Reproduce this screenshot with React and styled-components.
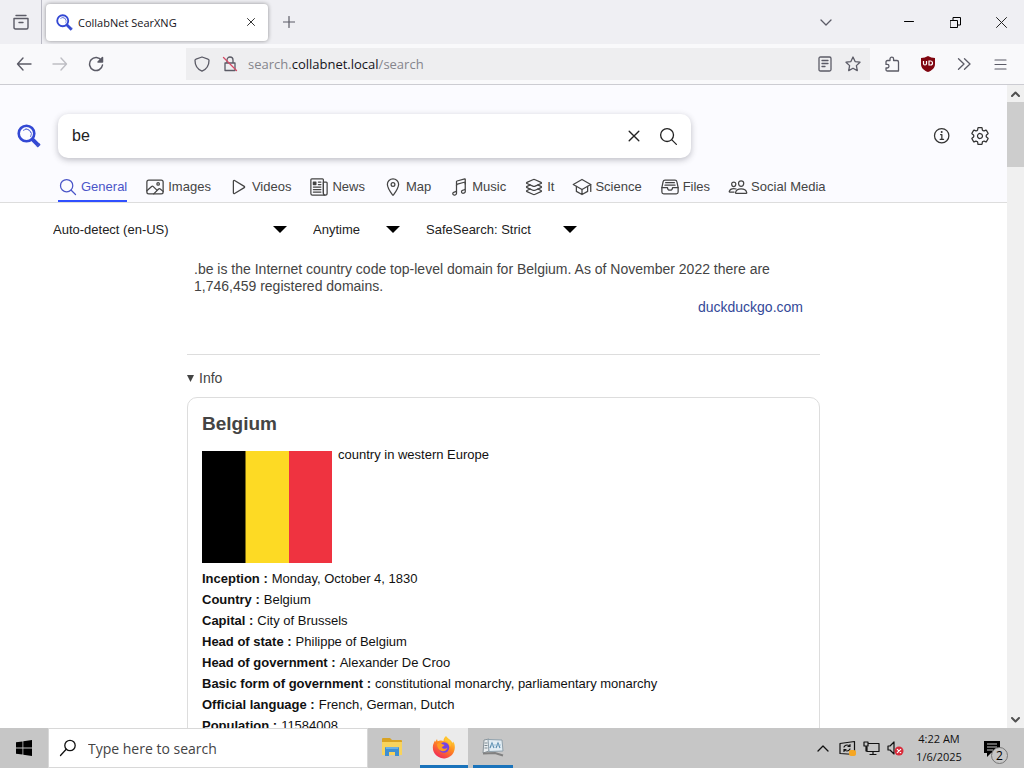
import React from "react";
import styled, { createGlobalStyle } from "styled-components";
import {
  IoSearchOutline,
  IoImageOutline,
  IoPlayOutline,
  IoNewspaperOutline,
  IoLocationOutline,
  IoMusicalNotesOutline,
  IoLayersOutline,
  IoSchoolOutline,
  IoFileTrayFullOutline,
  IoPeopleOutline,
  IoInformationCircleOutline,
  IoSettingsOutline,
  IoCloseOutline,
} from "react-icons/io5";

const uiFont = '"Open Sans", "Noto Sans", sans-serif';
const pageFont = '"Liberation Sans", Arial, sans-serif';

const GlobalStyle = createGlobalStyle`
  * { box-sizing: border-box; }
  body { margin: 0; font-family: ${pageFont}; background: #fff; }
  button, input, select { font: inherit; color: inherit; margin: 0; }
  svg { display: block; flex: none; }
`;

const Desktop = styled.div`
  display: flex;
  flex-direction: column;
  height: 100vh;
  overflow: hidden;
`;

const IconButton = styled.button`
  display: grid;
  place-items: center;
  flex: none;
  width: ${(p) => p.$width || 32}px;
  height: ${(p) => p.$height || 32}px;
  padding: 0;
  border: 0;
  background: none;
  color: ${(p) => p.$color || "#5b5b66"};
`;

/* Browser chrome */

const TabStrip = styled.div`
  display: flex;
  flex: none;
  align-items: center;
  height: 44px;
  background: #efeff3;
  font-family: ${uiFont};
`;

const TabListButton = styled(IconButton)`
  border-right: 1px solid #b9b9c4;
`;

const Tab = styled.div`
  display: flex;
  align-items: center;
  width: 222px;
  height: 37px;
  margin: 0 5px 0 4px;
  padding: 0 1px 0 10px;
  gap: 5px;
  border-radius: 4px;
  background: #fff;
  box-shadow: 0 0 4px rgba(0, 0, 0, 0.4);
  font-size: 11px;
  color: #15141a;
`;

const TabTitle = styled.span`
  flex: 1;
  white-space: nowrap;
`;

const WindowControls = styled.div`
  display: flex;
  margin-left: 44px;
`;

const Spacer = styled.div`
  flex: 1;
`;

const NavBar = styled.div`
  display: flex;
  flex: none;
  align-items: center;
  height: 41px;
  padding: 0 8px;
  gap: 4px;
  background: #f9f9fb;
  border-bottom: 1px solid #ccccd2;
  font-family: ${uiFont};
`;

const AddressBar = styled.div`
  display: flex;
  flex: 1;
  align-items: center;
  height: 32px;
  margin: 0 2px 0 70px;
  padding: 0 3px 0 2px;
  background: #eeeef0;
`;

const Address = styled.div`
  flex: 1;
  padding-left: 4px;
  font-size: 13px;
  color: #85858c;

  b {
    font-weight: 400;
    color: #15141a;
  }
`;

/* Page */

const Viewport = styled.div`
  display: flex;
  flex: 1;
  min-height: 0;
`;

const Page = styled.main`
  flex: 1;
  min-width: 0;
  overflow: hidden;
  background: #fff;
  color: #444;
`;

const Header = styled.header`
  background: #fbfbff;
  border-bottom: 1px solid #ddd;
`;

const SearchRow = styled.div`
  display: flex;
  align-items: center;
  padding: 29px 17px 0 17px;
`;

const LogoLink = styled.a`
  width: 41px;
`;

const SearchBox = styled.form`
  display: flex;
  align-items: center;
  flex: 0 1 633px;
  height: 44px;
  padding: 0 5px 0 14px;
  border-radius: 10px;
  background: #fff;
  box-shadow: 0 2px 6px rgba(60, 60, 70, 0.32);
  color: #222;
`;

const SearchInput = styled.input`
  flex: 1;
  min-width: 0;
  padding: 0;
  border: 0;
  outline: 0;
  background: none;
  font-size: 16px;
`;

const HeaderLinks = styled.nav`
  display: flex;
  margin-left: auto;
  gap: 18px;
`;

const HeaderLink = styled.a`
  color: #333;
`;

const Categories = styled.nav`
  display: flex;
  gap: 17px;
  margin: 15px 0 0 58px;
`;

const Category = styled.a`
  display: flex;
  align-items: center;
  gap: 3px;
  height: 29px;
  border-bottom: 2px solid ${(p) => (p.$active ? "#3050ff" : "transparent")};
  color: ${(p) => (p.$active ? "#4a55c8" : "#444")};
  font-size: 13px;
  text-decoration: none;
  white-space: nowrap;

  & + & {
    padding-left: 1px;
  }
`;

const Filters = styled.div`
  display: flex;
  gap: 26px;
  padding: 13px 0 0 53px;
  color: #222;
`;

const Filter = styled.label`
  display: grid;
  align-items: center;
  width: ${(p) => p.$width}px;
  height: 26px;
  font-size: 13px;

  select,
  svg {
    grid-area: 1 / 1;
  }

  svg {
    justify-self: end;
    pointer-events: none;
  }

  select {
    appearance: none;
    width: 100%;
    padding: 0;
    border: 0;
    background: none;
  }
`;

const Results = styled.div`
  width: 633px;
  max-width: calc(100% - 187px);
  margin-left: 187px;
`;

const Answer = styled.section`
  padding: 19px 17px 38px 7px;
  border-bottom: 1px solid #ddd;
  font-size: 14px;
  line-height: 17px;

  p {
    margin: 0 0 4px;
  }
`;

const SourceLink = styled.a`
  display: block;
  text-align: right;
  color: #334999;
  text-decoration: none;
`;

const InfoToggle = styled.summary`
  display: flex;
  align-items: center;
  gap: 5px;
  padding: 15px 0 10px;
  font-size: 14px;
  line-height: 17px;
  list-style: none;
`;

const InfoCard = styled.article`
  padding: 14px;
  border: 1px solid #ddd;
  border-radius: 10px;
  color: #111;
  font-size: 13px;
`;

const CardTitle = styled.h2`
  margin: 0 0 16px;
  font-size: 19px;
  line-height: 23px;
  color: #444;
`;

const Summary = styled.div`
  display: flex;
  gap: 6px;
  margin-bottom: 5px;
  line-height: 7px;

  p {
    margin: 0;
  }
`;

const FactList = styled.dl`
  margin: 0;
  line-height: 21px;
`;

const Fact = styled.div`
  display: flex;
  gap: 4px;

  dt {
    font-weight: 700;
  }

  dd {
    margin: 0;
  }
`;

const ScrollBar = styled.div`
  display: flex;
  flex-direction: column;
  width: 17px;
  background: #f0f0f0;
`;

const ScrollThumb = styled.div`
  height: 65px;
  background: #cdcdcd;
`;

/* Taskbar */

const Taskbar = styled.footer`
  display: flex;
  flex: none;
  align-items: center;
  height: 40px;
  background: #c6c6c6;
  color: #111;
  font-family: ${uiFont};
`;

const TaskSearch = styled.label`
  display: flex;
  align-items: center;
  gap: 11px;
  flex: 0 1 320px;
  height: 40px;
  padding-left: 10px;
  border: 1px solid #d8d8d8;
  background: #fff;
  font-size: 14px;

  input {
    flex: 1;
    min-width: 0;
    padding: 0;
    border: 0;
    outline: 0;
    background: none;
  }

  input::placeholder {
    color: #444;
    opacity: 1;
  }
`;

const TaskApps = styled.div`
  display: flex;
  gap: 5px;
`;

const TaskButton = styled(IconButton)`
  background: ${(p) => (p.$active ? "#ebebeb" : "none")};
  border-bottom: 3px solid ${(p) => (p.$open ? "#1a73bb" : "transparent")};
`;

const Tray = styled.div`
  display: flex;
  align-items: center;
  margin-left: auto;
  padding-right: 15px;
`;

const Clock = styled.time`
  width: 62px;
  margin: 0 13px 0 1px;
  font-size: 11px;
  line-height: 18px;
  text-align: center;
  white-space: nowrap;
`;

const Line = ({ size = 16, width = size, height = size, stroke = 1, children }) => (
  <svg
    width={width}
    height={height}
    viewBox={`0 0 ${width} ${height}`}
    fill="none"
    stroke="currentColor"
    strokeWidth={stroke}
    strokeLinecap="round"
    strokeLinejoin="round"
    aria-hidden="true"
  >
    {children}
  </svg>
);

const Logo = ({ size }) => (
  <svg width={size} height={size} viewBox="0 0 24 24" fill="none" aria-hidden="true">
    <circle cx="9.5" cy="9.5" r="7.8" stroke="#3348d4" strokeWidth="2.6" />
    <path d="M6 6.5a5 5 0 0 1 7.5 6.5M8 5.2a5 5 0 0 1 6 4" stroke="#6878db" strokeWidth="1" />
    <path d="M15.2 15.2l7 7" stroke="#3348d4" strokeWidth="4" />
    <path d="M19.6 22.2l2.8-2.8" stroke="#5260b8" strokeWidth="1" />
  </svg>
);

const CaretDown = () => (
  <svg width="14" height="7" viewBox="0 0 14 7" aria-hidden="true">
    <path d="M0 0h14L7 7z" fill="#000" />
  </svg>
);

const Flag = () => (
  <svg width="130" height="112" viewBox="0 0 130 112" role="img" aria-label="Flag of Belgium">
    <path d="M0 0h44v112H0z" fill="#000" />
    <path d="M43.500 0h43.500v112h-43.500z" fill="#fdda24" />
    <path d="M87 0h43v112H87z" fill="#ef3340" />
  </svg>
);

const FolderIcon = () => (
  <svg width="22" height="20" viewBox="0 0 22 20" aria-hidden="true">
    <path d="M1 2q0-1 1-1h7l2 2h9q1 0 1 1v13H1z" fill="#d9a323" />
    <path d="M1 5h20v13H1z" fill="#f8d35c" />
    <path d="M4 19v-8q0-1 1-1h12q1 0 1 1v8h-4v-4H8v4z" fill="#3f8fd2" />
    <path d="M5 10h12v2H5z" fill="#6ab0e4" />
  </svg>
);

const FirefoxIcon = () => (
  <svg width="24" height="24" viewBox="0 0 24 24" aria-hidden="true">
    <defs>
      <linearGradient id="fox" x1="0.8" y1="0" x2="0.2" y2="1">
        <stop offset="0" stopColor="#ffdf3a" />
        <stop offset="0.45" stopColor="#ff8a1f" />
        <stop offset="1" stopColor="#f01f5d" />
      </linearGradient>
    </defs>
    <path
      d="M14 1c1 2 4 3 6 6l1 1 .2-1.500c1.300 2 1.800 4 1.600 6.500A11 11 0 1 1 2 7.500l1-2 .3 1.500L5 4l.6 2.200L8 5.500c1.500-.3 2.500 0 3.500.5C11.500 4 12.500 2 14 1z"
      fill="url(#fox)"
    />
    <circle cx="12" cy="12.500" r="5.200" fill="#7542e5" />
    <path d="M5 9c2-1.500 4-1 5.500.2l2 .8c-.5 1.400-1.800 1.500-2.700 2 .5 2 4 2.500 5.700.5-.5 3-3.500 4.500-6 3.500C6.500 15 5 12 5 9z" fill="#ff9a22" />
    <path d="M13 6c3 0 5 3 5 6 1-2 1-4 0-6-1.500-2-3-2.500-4-4-1 1-1.500 2.500-1 4z" fill="#ffc52e" />
  </svg>
);

const MonitorIcon = () => (
  <svg width="24" height="20" viewBox="0 0 24 20" aria-hidden="true">
    <path d="M3 3l5-1v12l-6 2z" fill="#e9edef" stroke="#8a959c" />
    <path d="M7 2.500L21 3l1 11-14 .5z" fill="#e2edf4" stroke="#8fa0ab" />
    <path d="M9 11l2-5 2 5M15 11l2-5 2 5" fill="none" stroke="#5a8db0" strokeWidth="1.200" />
    <path d="M10 8h10" stroke="#9fc0d6" />
    <path d="M3.500 6h3M3.500 8.500h3M3.500 11h3" stroke="#7c8a92" />
    <path d="M2 16.500l12-.5 8 2.500" fill="none" stroke="#808080" strokeWidth="2" />
  </svg>
);

const categories = [
  ["General", IoSearchOutline],
  ["Images", IoImageOutline],
  ["Videos", IoPlayOutline],
  ["News", IoNewspaperOutline],
  ["Map", IoLocationOutline],
  ["Music", IoMusicalNotesOutline],
  ["It", IoLayersOutline],
  ["Science", IoSchoolOutline],
  ["Files", IoFileTrayFullOutline],
  ["Social Media", IoPeopleOutline],
];

const filters = [
  { label: "Language", value: "Auto-detect (en-US)", width: 234 },
  { label: "Time range", value: "Anytime", width: 87 },
  { label: "SafeSearch", value: "SafeSearch: Strict", width: 151 },
];

const facts = [
  ["Inception", "Monday, October 4, 1830"],
  ["Country", "Belgium"],
  ["Capital", "City of Brussels"],
  ["Head of state", "Philippe of Belgium"],
  ["Head of government", "Alexander De Croo"],
  ["Basic form of government", "constitutional monarchy, parliamentary monarchy"],
  ["Official language", "French, German, Dutch"],
  ["Population", "11584008"],
];

function BrowserTabs() {
  return (
    <TabStrip>
      <TabListButton $width={42} $height={44} aria-label="Firefox View">
        <Line size={16} stroke={1.4}>
          <path d="M3 1.500h10M1 4.500h14v9q0 1.500-1.500 1.500h-11Q1 15 1 13.500zM6 8.500h4" />
        </Line>
      </TabListButton>
      <Tab>
        <Logo size={17} />
        <TabTitle>CollabNet SearXNG</TabTitle>
        <IconButton aria-label="Close tab" $color="#333">
          <Line size={8}>
            <path d="M0.500 0.500l7 7M7.500 0.500l-7 7" />
          </Line>
        </IconButton>
      </Tab>
      <IconButton aria-label="New tab">
        <Line size={12} stroke={1.2}>
          <path d="M6 0.500v11M0.500 6h11" />
        </Line>
      </IconButton>
      <Spacer />
      <IconButton aria-label="List all tabs">
        <Line width={12} height={7} stroke={1.3}>
          <path d="M1 1l5 5 5-5" />
        </Line>
      </IconButton>
      <WindowControls>
        <IconButton aria-label="Minimize" $width={46} $color="#000">
          <Line width={10} height={2}>
            <path d="M0.500 0.500h9" />
          </Line>
        </IconButton>
        <IconButton aria-label="Restore" $width={46} $color="#000">
          <Line size={11}>
            <path d="M0.500 3.500h7v7h-7zM3 3V0.500h7.500V8H8" />
          </Line>
        </IconButton>
        <IconButton aria-label="Close" $width={46} $color="#222">
          <Line size={11}>
            <path d="M0.500 0.500l10 10M10.500 0.500l-10 10" />
          </Line>
        </IconButton>
      </WindowControls>
    </TabStrip>
  );
}

function BrowserNav() {
  return (
    <NavBar>
      <IconButton aria-label="Back">
        <Line size={16} stroke={1.4}>
          <path d="M15 8H1.500M7 2L1.500 8 7 14" />
        </Line>
      </IconButton>
      <IconButton aria-label="Forward" $color="#bebec4">
        <Line size={16} stroke={1.4}>
          <path d="M1 8h13.500M9 2l5.500 6L9 14" />
        </Line>
      </IconButton>
      <IconButton aria-label="Reload">
        <Line size={16} stroke={1.5}>
          <path d="M13.500 4.500A6.500 6.500 0 1 0 14.500 9" />
          <path d="M14.500 1.500V6H10z" fill="currentColor" />
        </Line>
      </IconButton>
      <AddressBar>
        <IconButton aria-label="Tracking protection" $width={28}>
          <Line size={16} stroke={1.3}>
            <path d="M8 1l6 2.200q1 .3 1 1.300c0 5-2 8.500-7 10.700C3 13 1 9.500 1 4.500q0-1 1-1.300z" />
          </Line>
        </IconButton>
        <IconButton aria-label="Connection not secure" $width={28}>
          <Line size={16} stroke={1.3}>
            <path d="M3 7h10v7.500H3zM5 7V4a3 3 0 0 1 6 0v3" />
            <path d="M1.500 1.500l13 13" stroke="#d44a66" />
          </Line>
        </IconButton>
        <Address>
          search.<b>collabnet.local</b>/search
        </Address>
        <IconButton aria-label="Reader view" $width={28}>
          <Line width={14} height={16} stroke={1.3}>
            <path d="M2.500 1h9q1.500 0 1.500 1.500v11q0 1.500-1.500 1.500h-9Q1 15 1 13.500v-11Q1 1 2.500 1zM4 4.500h6M4 7.500h6M4 10.500h3" />
          </Line>
        </IconButton>
        <IconButton aria-label="Bookmark this page" $width={28}>
          <Line size={16} stroke={1.3}>
            <path d="M8 1l2.100 4.600 4.900.6-3.600 3.400.9 5L8 12.200l-4.300 2.400.9-5L1 6.200l4.900-.6z" />
          </Line>
        </IconButton>
      </AddressBar>
      <IconButton aria-label="Extensions">
        <Line size={16} stroke={1.3}>
          <path d="M2 6q0-1.500 1.500-1.500H6V3a1.800 1.800 0 0 1 3.600 0v1.500H13q1.500 0 1.500 1.500v9H3.500Q2 15 2 13.500V12h1.200a1.800 1.800 0 0 0 0-3.600H2z" />
        </Line>
      </IconButton>
      <IconButton aria-label="uBlock Origin">
        <svg width="16" height="16" viewBox="0 0 16 16" aria-hidden="true">
          <path d="M8 0q3 2 7 2v6c0 4-3 6.500-7 8-4-1.500-7-4-7-8V2q4 0 7-2z" fill="#800610" />
          <path d="M3.500 5v2.500a1.500 1.500 0 0 0 3 0V5M9 5v4h1.500a2 2 0 0 0 0-4z" fill="none" stroke="#fff" strokeWidth="1.200" />
        </svg>
      </IconButton>
      <IconButton aria-label="More tools">
        <Line width={14} height={12} stroke={1.3}>
          <path d="M1.500 0.800L7 6l-5.500 5.200M7.500 0.800L13 6l-5.500 5.200" />
        </Line>
      </IconButton>
      <IconButton aria-label="Open application menu">
        <Line width={13} height={11} stroke={1.2}>
          <path d="M1 1h11M1 5.500h11M1 10h11" />
        </Line>
      </IconButton>
    </NavBar>
  );
}

function SearchHeader() {
  return (
    <Header>
      <SearchRow>
        <LogoLink href="#home" aria-label="SearXNG home">
          <Logo size={24} />
        </LogoLink>
        <SearchBox onSubmit={(e) => e.preventDefault()}>
          <SearchInput aria-label="Search" defaultValue="be" />
          <IconButton type="reset" aria-label="Clear" $color="#222">
            <IoCloseOutline size={22} />
          </IconButton>
          <IconButton type="submit" aria-label="Search" $color="#222" $width={36}>
            <IoSearchOutline size={21} />
          </IconButton>
        </SearchBox>
        <HeaderLinks>
          <HeaderLink href="#about" aria-label="About">
            <IoInformationCircleOutline size={20} />
          </HeaderLink>
          <HeaderLink href="#preferences" aria-label="Preferences">
            <IoSettingsOutline size={20} />
          </HeaderLink>
        </HeaderLinks>
      </SearchRow>
      <Categories>
        {categories.map(([name, Icon], i) => (
          <Category key={name} href={`#${name}`} $active={i === 0}>
            <Icon size={20} />
            {name}
          </Category>
        ))}
      </Categories>
    </Header>
  );
}

function ResultsPage() {
  return (
    <Page>
      <SearchHeader />
      <Filters>
        {filters.map((f) => (
          <Filter key={f.label} $width={f.width}>
            <select aria-label={f.label}>
              <option>{f.value}</option>
            </select>
            <CaretDown />
          </Filter>
        ))}
      </Filters>
      <Results>
        <Answer>
          <p>
            .be is the Internet country code top-level domain for Belgium. As of November 2022 there are
            1,746,459 registered domains.
          </p>
          <SourceLink href="#duckduckgo">duckduckgo.com</SourceLink>
        </Answer>
        <details open>
          <InfoToggle>
            <svg width="7" height="7" viewBox="0 0 7 7" aria-hidden="true">
              <path d="M0 0h7L3.500 7z" fill="#444" />
            </svg>
            Info
          </InfoToggle>
          <InfoCard>
            <CardTitle>Belgium</CardTitle>
            <Summary>
              <Flag />
              <p>country in western Europe</p>
            </Summary>
            <FactList>
              {facts.map(([term, value]) => (
                <Fact key={term}>
                  <dt>{term} :</dt>
                  <dd>{value}</dd>
                </Fact>
              ))}
            </FactList>
          </InfoCard>
        </details>
      </Results>
    </Page>
  );
}

function PageScrollBar() {
  return (
    <ScrollBar>
      <IconButton aria-label="Scroll up" $width={17} $height={17} $color="#505050">
        <Line width={9} height={6} stroke={2}>
          <path d="M1 5l3.500-3.500L8 5" />
        </Line>
      </IconButton>
      <ScrollThumb />
      <Spacer />
      <IconButton aria-label="Scroll down" $width={17} $height={17} $color="#505050">
        <Line width={9} height={6} stroke={2}>
          <path d="M1 1l3.500 3.500L8 1" />
        </Line>
      </IconButton>
    </ScrollBar>
  );
}

function DesktopTaskbar() {
  return (
    <Taskbar>
      <IconButton aria-label="Start" $width={48} $height={40} $color="#000">
        <svg width="16" height="16" viewBox="0 0 16 16" fill="currentColor" aria-hidden="true">
          <path d="M0 2.300L6.500 1.400V7.600H0zM7.300 1.300L16 0V7.600H7.300zM0 8.400H6.500V14.600L0 13.700zM7.300 8.400H16V16L7.300 14.700z" />
        </svg>
      </IconButton>
      <TaskSearch>
        <Line size={18} stroke={1.3}>
          <circle cx="11" cy="6.500" r="5.200" />
          <path d="M7.200 10.300L1.500 16.500" />
        </Line>
        <input aria-label="Search the computer" placeholder="Type here to search" />
      </TaskSearch>
      <TaskApps>
        <TaskButton aria-label="File Explorer" $width={47} $height={40}>
          <FolderIcon />
        </TaskButton>
        <TaskButton aria-label="Firefox" $width={48} $height={40} $active $open>
          <FirefoxIcon />
        </TaskButton>
        <TaskButton aria-label="Resource Monitor" $width={40} $height={40} $open>
          <MonitorIcon />
        </TaskButton>
      </TaskApps>
      <Tray>
        <IconButton aria-label="Show hidden icons" $width={24} $color="#111">
          <Line width={12} height={7} stroke={1.3}>
            <path d="M1 6l5-5 5 5" />
          </Line>
        </IconButton>
        <IconButton aria-label="Updates" $width={24} $color="#111">
          <Line size={17} stroke={1.2}>
            <path d="M1 3.500l14.500-2v13L1 13.500z" />
            <path d="M5 7q1-2 3-2t3 1.500M11 4.500v2H9M11 9q-1 2-3 2t-3-1.500M5 11.500v-2h2" />
            <rect x="10" y="10" width="7" height="6" rx="2" fill="#f5a623" stroke="none" />
          </Line>
        </IconButton>
        <IconButton aria-label="Network" $width={24} $color="#111">
          <Line width={17} height={15} stroke={1.2}>
            <path d="M5 2.500h11v8H4V6M1 1h4v4H1zM3 5v5M10 10.500v3M7 13.500h6" />
          </Line>
        </IconButton>
        <IconButton aria-label="Sound muted" $width={24} $color="#111">
          <Line size={17} stroke={1.2}>
            <path d="M1 6h2l4-4v12L3 10H1z" />
            <circle cx="12" cy="11" r="4.500" fill="#d92b3a" stroke="none" />
            <path d="M10.300 9.300l3.400 3.400M13.700 9.300l-3.400 3.400" stroke="#fff" />
          </Line>
        </IconButton>
        <Clock>
          4:22 AM
          <br />
          1/6/2025
        </Clock>
        <IconButton aria-label="2 notifications" $width={26} $height={40} $color="#000">
          <svg width="25" height="34" viewBox="0 -8 25 34" aria-hidden="true">
            <path d="M0 2h16v12H7l-4 4v-4H0z" fill="#000" />
            <path d="M3 5h10M3 8h10M3 11h6" stroke="#c6c6c6" />
            <circle cx="15.500" cy="16.500" r="8" fill="#c6c6c6" stroke="#777" />
            <text x="15.500" y="21" textAnchor="middle" fontFamily="Open Sans" fontSize="12" fill="#000">2</text>
          </svg>
        </IconButton>
      </Tray>
    </Taskbar>
  );
}

export default function App() {
  return (
    <Desktop>
      <GlobalStyle />
      <BrowserTabs />
      <BrowserNav />
      <Viewport>
        <ResultsPage />
        <PageScrollBar />
      </Viewport>
      <DesktopTaskbar />
    </Desktop>
  );
}
